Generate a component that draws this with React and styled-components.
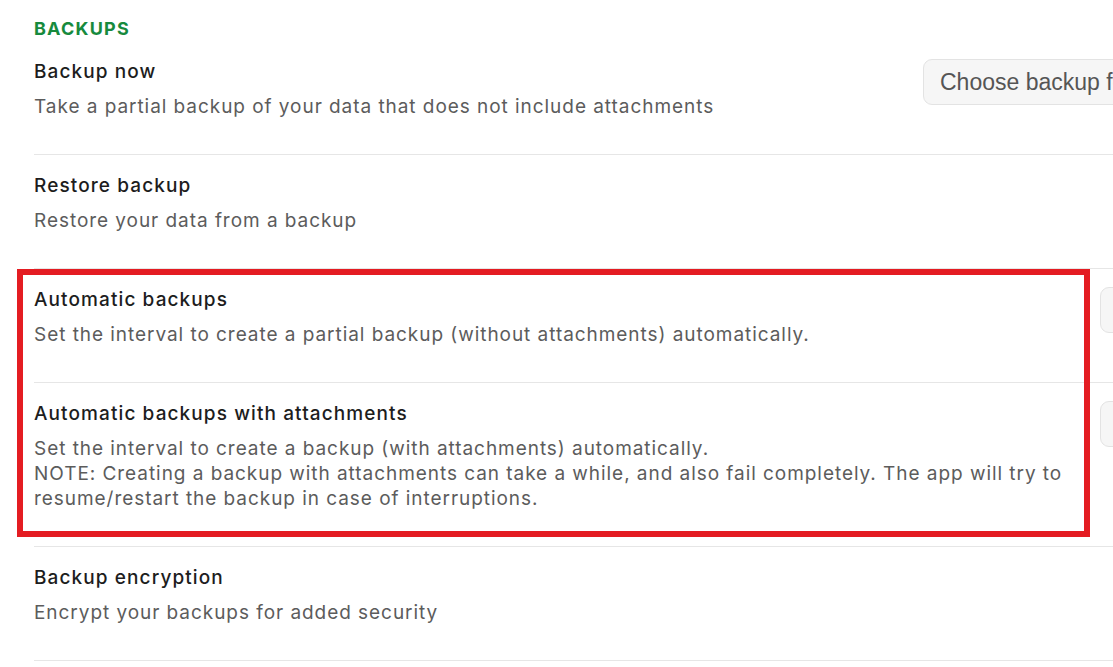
import React from "react";
import styled, { createGlobalStyle } from "styled-components";

const Global = createGlobalStyle`
  html, body { margin: 0; padding: 0; background: #ffffff; overflow: hidden; }
  body { font-family: Inter, "Noto Sans", sans-serif; }
`;

const Page = styled.div`
  width: 1400px;
  padding: 19px 0 0 34px;
  box-sizing: border-box;
`;

const SectionTitle = styled.div`
  font-size: 18px;
  line-height: 20px;
  font-weight: 700;
  color: #178a3d;
  letter-spacing: 1.2px;
  margin-bottom: 21px;
`;

const Row = styled.div`
  display: flex;
  align-items: flex-start;
  gap: 24px;
  padding: ${(p) => (p.$first ? "0" : "19px")} 0 35px 0;
  border-bottom: 1px solid #e6e6e6;
`;

const Text = styled.div`
  flex: 1;
  min-width: 0;
  display: flex;
  flex-direction: column;
  gap: 10px;
`;

const Title = styled.div`
  font-size: 19px;
  line-height: 24px;
  font-weight: 500;
  letter-spacing: 1.1px;
  color: #1d1d1d;
`;

const Desc = styled.div`
  font-size: 19px;
  line-height: 25px;
  font-weight: 400;
  letter-spacing: 0.95px;
  color: #5c5c5c;
  max-width: 1040px;
`;

const Control = styled.div`
  flex: none;
  width: ${(p) => p.$width}px;
  height: 46px;
  box-sizing: border-box;
  border: 1px solid #e3e3e3;
  border-radius: 9px;
  background: #f6f6f6;
  display: flex;
  align-items: center;
  padding-left: 16px;
  font-family: "Liberation Sans", Arial, sans-serif;
  font-size: 23px;
  color: #555555;
  white-space: nowrap;
  overflow: hidden;
  margin-top: -1px;
`;

const Highlight = styled.div`
  position: relative;
`;

const Annotation = styled.div`
  position: absolute;
  top: 0;
  left: -17px;
  width: 1073px;
  height: 268px;
  border: 6px solid #e41c22;
  box-sizing: border-box;
  pointer-events: none;
`;

export default function App() {
  return (
    <>
      <Global />
      <Page>
        <SectionTitle>BACKUPS</SectionTitle>
        <Row $first>
          <Text>
            <Title>Backup now</Title>
            <Desc>Take a partial backup of your data that does not include attachments</Desc>
          </Text>
          <Control $width={477}>Choose backup folder</Control>
        </Row>
        <Row>
          <Text>
            <Title>Restore backup</Title>
            <Desc>Restore your data from a backup</Desc>
          </Text>
        </Row>
        <Highlight>
          <Row>
            <Text>
              <Title>Automatic backups</Title>
              <Desc>Set the interval to create a partial backup (without attachments) automatically.</Desc>
            </Text>
            <Control $width={300}>Never</Control>
          </Row>
          <Row>
            <Text>
              <Title>Automatic backups with attachments</Title>
              <Desc>
                Set the interval to create a backup (with attachments) automatically.
                <br />
                NOTE: Creating a backup with attachments can take a while, and also fail completely. The app will try to resume/restart the backup in case of interruptions.
              </Desc>
            </Text>
            <Control $width={300}>Never</Control>
          </Row>
          <Annotation />
        </Highlight>
        <Row>
          <Text>
            <Title>Backup encryption</Title>
            <Desc>Encrypt your backups for added security</Desc>
          </Text>
        </Row>
      </Page>
    </>
  );
}
